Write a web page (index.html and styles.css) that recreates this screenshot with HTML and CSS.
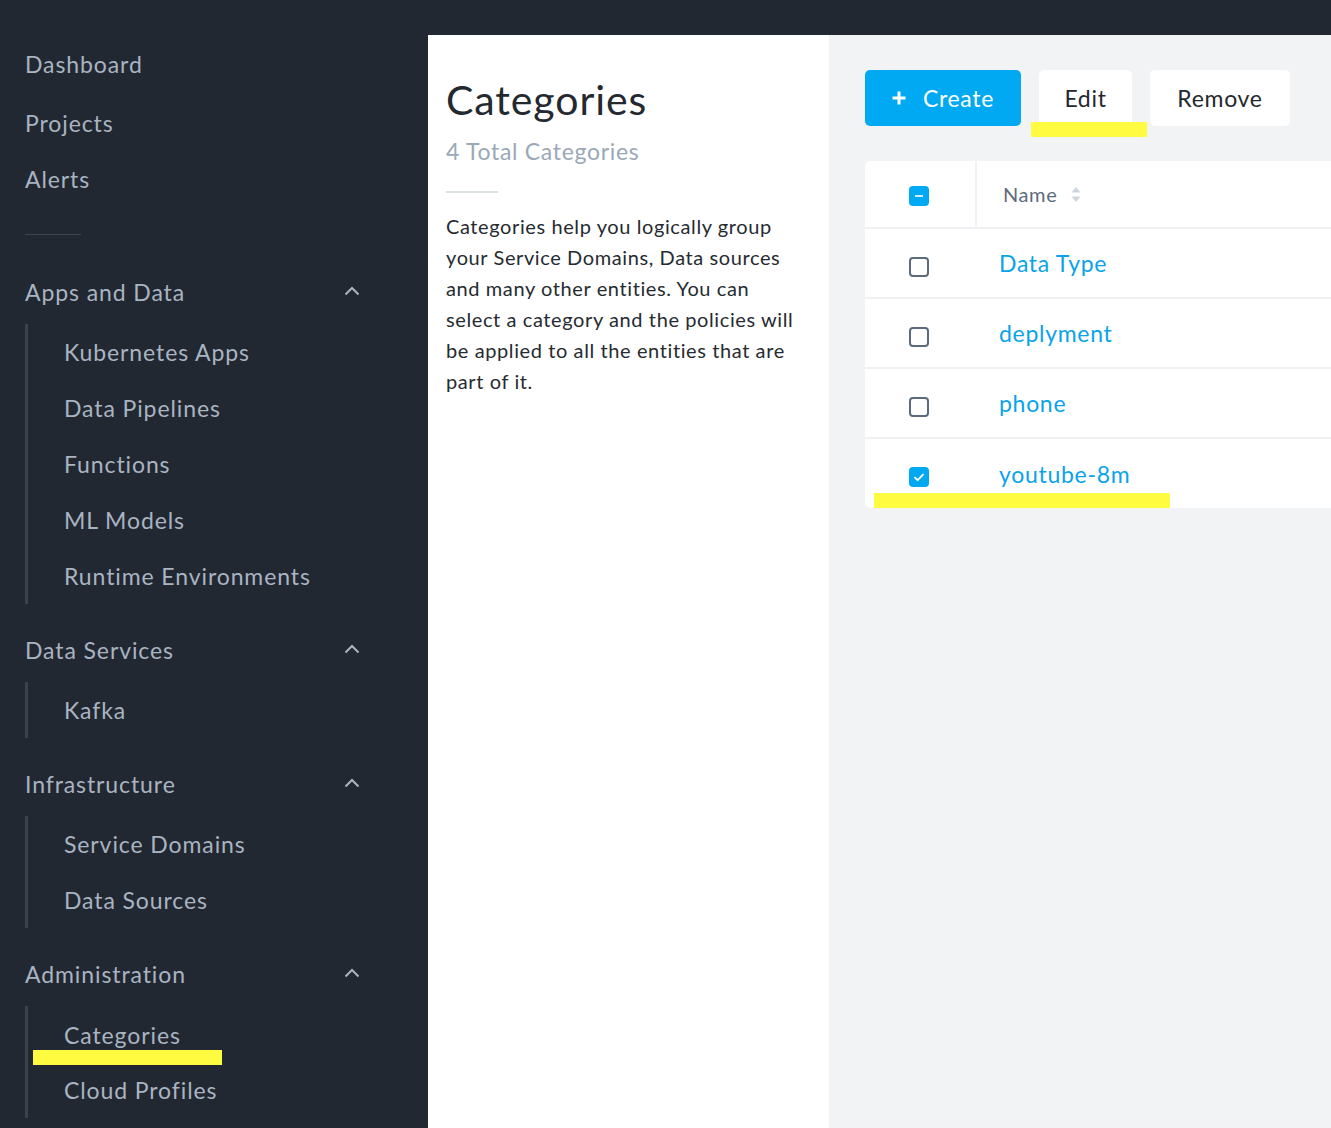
FILE: index.html
```html
<!DOCTYPE html>
<html lang="en">
<head>
<meta charset="utf-8">
<title>Categories</title>
<link rel="stylesheet" href="styles.css">
</head>
<body>
<div class="app">
  <nav class="sidebar">
    <a class="nav-top nav-first">Dashboard</a>
    <a class="nav-top nav-projects">Projects</a>
    <a class="nav-top">Alerts</a>
    <div class="nav-divider"></div>

    <div class="nav-section nav-section-first">
      <span>Apps and Data</span>
      <svg class="chev" width="16" height="10" viewBox="0 0 16 10"><polyline points="1.5,8.5 8,2 14.5,8.5" fill="none" stroke="#a9b4c2" stroke-width="2"/></svg>
    </div>
    <div class="nav-sub">
      <a class="nav-item">Kubernetes Apps</a>
      <a class="nav-item">Data Pipelines</a>
      <a class="nav-item">Functions</a>
      <a class="nav-item">ML Models</a>
      <a class="nav-item">Runtime Environments</a>
    </div>

    <div class="nav-section">
      <span>Data Services</span>
      <svg class="chev" width="16" height="10" viewBox="0 0 16 10"><polyline points="1.5,8.5 8,2 14.5,8.5" fill="none" stroke="#a9b4c2" stroke-width="2"/></svg>
    </div>
    <div class="nav-sub">
      <a class="nav-item">Kafka</a>
    </div>

    <div class="nav-section">
      <span>Infrastructure</span>
      <svg class="chev" width="16" height="10" viewBox="0 0 16 10"><polyline points="1.5,8.5 8,2 14.5,8.5" fill="none" stroke="#a9b4c2" stroke-width="2"/></svg>
    </div>
    <div class="nav-sub">
      <a class="nav-item">Service Domains</a>
      <a class="nav-item">Data Sources</a>
    </div>

    <div class="nav-section">
      <span>Administration</span>
      <svg class="chev" width="16" height="10" viewBox="0 0 16 10"><polyline points="1.5,8.5 8,2 14.5,8.5" fill="none" stroke="#a9b4c2" stroke-width="2"/></svg>
    </div>
    <div class="nav-sub">
      <a class="nav-item nav-active">Categories<span class="mark mark-nav"></span></a>
      <a class="nav-item">Cloud Profiles</a>
    </div>
  </nav>

  <div class="main">
    <div class="topbar"></div>
    <div class="content">
      <section class="info">
        <h1 class="title">Categories</h1>
        <div class="count">4 Total Categories</div>
        <div class="info-divider"></div>
        <p class="desc">Categories help you logically group your Service Domains, Data sources and many other entities. You can select a category and the policies will be applied to all the entities that are part of it.</p>
      </section>

      <section class="workspace">
        <div class="toolbar">
          <button class="btn btn-primary">
            <svg width="14" height="14" viewBox="0 0 14 14"><path d="M7 0.5v13M0.5 7h13" stroke="#fff" stroke-width="3"/></svg>
            <span>Create</span>
          </button>
          <button class="btn btn-edit">Edit<span class="mark mark-edit"></span></button>
          <button class="btn btn-remove">Remove</button>
        </div>

        <div class="table">
          <div class="row row-head">
            <div class="cell-check cell-check-head">
              <svg class="cb" width="20" height="20" viewBox="0 0 20 20"><rect x="0" y="0" width="20" height="20" rx="4" fill="#00a9f1"/><path d="M6 10h8" stroke="#fff" stroke-width="1.6"/></svg>
            </div>
            <div class="cell-name head-name">
              <span>Name</span>
              <svg width="10" height="19" viewBox="0 0 10 19"><path d="M0.5 7.5L5 2l4.5 5.5z" fill="#cfd5dd"/><path d="M0.5 11.5L5 17l4.5-5.5z" fill="#cfd5dd"/></svg>
            </div>
          </div>
          <div class="row">
            <div class="cell-check"><span class="box cb"></span></div>
            <div class="cell-name link">Data Type</div>
          </div>
          <div class="row">
            <div class="cell-check"><span class="box cb"></span></div>
            <div class="cell-name link">deplyment</div>
          </div>
          <div class="row">
            <div class="cell-check"><span class="box cb"></span></div>
            <div class="cell-name link">phone</div>
          </div>
          <div class="row row-last">
            <div class="cell-check">
              <svg class="cb" width="20" height="20" viewBox="0 0 20 20"><rect x="0" y="0" width="20" height="20" rx="4" fill="#00a9f1"/><polyline points="5.5,10.2 8.6,13.2 14.5,7.2" fill="none" stroke="#fff" stroke-width="1.8"/></svg>
            </div>
            <div class="cell-name link">youtube-8m</div>
            <span class="mark mark-row"></span>
          </div>
        </div>
      </section>
    </div>
  </div>
</div>
</body>
</html>
```

FILE: styles.css
```css
* { box-sizing: border-box; }
html, body { margin: 0; padding: 0; }
body {
  font-family: Lato, "Open Sans", Arial, sans-serif;
  background: #222831;
  width: 1331px;
  height: 1128px;
  overflow: hidden;
}
.app {
  display: flex;
  height: 1128px;
}

/* Sidebar */
.sidebar {
  width: 428px;
  flex: none;
  background: #222831;
  padding: 36px 0 0 25px;
  display: flex;
  flex-direction: column;
  color: #a9b4c2;
  font-size: 23px;
  letter-spacing: 0.9px;
}
.nav-top {
  display: flex;
  align-items: center;
  height: 56px;
}
.nav-projects { margin-top: 3px; }
.nav-divider {
  width: 56px;
  height: 1px;
  background: #3b444f;
  margin-top: 27px;
}
.nav-section {
  display: flex;
  align-items: center;
  justify-content: space-between;
  height: 56px;
  margin-top: 18px;
  width: 335px;
}
.nav-section-first { margin-top: 29px; }
.chev { margin-top: -2px; }
.nav-sub {
  margin-top: 4px;
  border-left: 3px solid #39424d;
  display: flex;
  flex-direction: column;
}
.nav-item {
  position: relative;
  display: flex;
  align-items: center;
  height: 56px;
  padding-left: 36px;
}
.nav-active { padding-top: 2px; }

/* Highlight marks */
.mark {
  position: absolute;
  background: #fefb41;
  height: 15px;
}
.mark-nav { left: 5px; top: 44px; width: 189px; }
.mark-edit { left: -8px; top: 52px; width: 116px; }
.mark-row { left: 9px; top: 54px; width: 296px; }

/* Main */
.main {
  flex: 1;
  display: flex;
  flex-direction: column;
}
.topbar {
  height: 35px;
  background: #222831;
  flex: none;
}
.content {
  flex: 1;
  display: flex;
}
.info {
  width: 401px;
  flex: none;
  background: #ffffff;
  padding: 40px 30px 0 18px;
}
.title {
  margin: 0;
  font-size: 41px;
  font-weight: 400;
  line-height: 50px;
  color: #24292f;
  letter-spacing: 0.9px;
}
.count {
  margin-top: 11px;
  font-size: 23px;
  line-height: 30px;
  color: #9aa8b8;
  letter-spacing: 0.7px;
}
.info-divider {
  width: 52px;
  height: 2px;
  background: #dbe0e7;
  margin-top: 25px;
}
.desc {
  margin: 18px 0 0;
  font-size: 20px;
  line-height: 31px;
  color: #262b31;
  letter-spacing: 0.6px;
}

/* Workspace */
.workspace {
  flex: 1;
  background: #f2f3f5;
  padding: 35px 0 0 36px;
}
.toolbar {
  display: flex;
  gap: 18px;
}
.btn {
  position: relative;
  height: 56px;
  border: none;
  border-radius: 5px;
  font-family: inherit;
  font-size: 23px;
  letter-spacing: 0.7px;
  display: flex;
  align-items: center;
  justify-content: center;
  padding: 0;
}
.btn-primary {
  width: 156px;
  background: #00a9f1;
  color: #ffffff;
  gap: 17px;
}
.btn-edit {
  width: 93px;
  background: #ffffff;
  color: #24292f;
}
.btn-remove {
  width: 140px;
  background: #ffffff;
  color: #24292f;
}

.table {
  margin-top: 35px;
  background: #ffffff;
  border-radius: 5px 0 0 5px;
}
.row {
  position: relative;
  display: flex;
  height: 70px;
  border-bottom: 2px solid #eff1f4;
}
.row-head { height: 68px; }
.row-last { border-bottom: none; height: 69px; }
.cell-check {
  width: 110px;
  flex: none;
  display: flex;
  align-items: center;
  padding-left: 44px;
}
.cb { margin-top: 7px; }
.cell-check-head {
  border-right: 2px solid #eff1f4;
  width: 112px;
}
.cell-check-head .cb { margin-top: 3px; }
.cell-name {
  display: flex;
  align-items: center;
  padding-left: 24px;
  font-size: 23px;
  letter-spacing: 0.7px;
}
.head-name {
  font-size: 20px;
  color: #5d6c7c;
  gap: 14px;
  padding-left: 26px;
  letter-spacing: 0.6px;
}
.link { color: #0aa3ea; }
.box {
  width: 20px;
  height: 20px;
  border: 2px solid #5b6b7c;
  border-radius: 4px;
  display: block;
}
```
